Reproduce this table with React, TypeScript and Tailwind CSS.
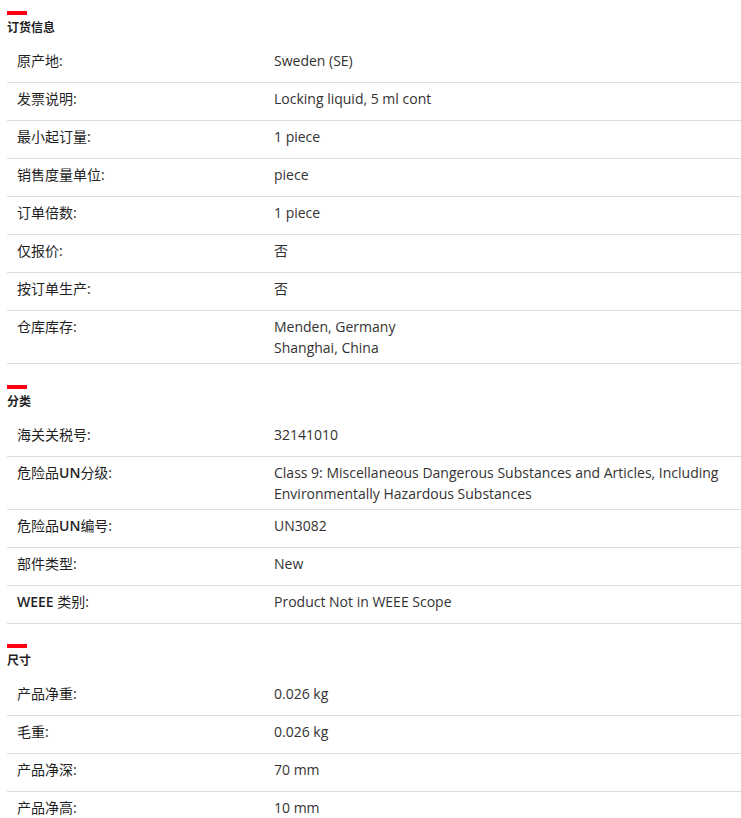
import React from "react";

type Row = { label: string; value: string[] };
type Section = { title: string; rows: Row[]; tight?: boolean };

const sections: Section[] = [
  {
    title: "订货信息",
    rows: [
      { label: "原产地:", value: ["Sweden (SE)"] },
      { label: "发票说明:", value: ["Locking liquid, 5 ml cont"] },
      { label: "最小起订量:", value: ["1 piece"] },
      { label: "销售度量单位:", value: ["piece"] },
      { label: "订单倍数:", value: ["1 piece"] },
      { label: "仅报价:", value: ["否"] },
      { label: "按订单生产:", value: ["否"] },
      { label: "仓库库存:", value: ["Menden, Germany", "Shanghai, China"] },
    ],
  },
  {
    title: "分类",
    rows: [
      { label: "海关关税号:", value: ["32141010"] },
      {
        label: "危险品UN分级:",
        value: [
          "Class 9: Miscellaneous Dangerous Substances and Articles, Including Environmentally Hazardous Substances",
        ],
      },
      { label: "危险品UN编号:", value: ["UN3082"] },
      { label: "部件类型:", value: ["New"] },
      { label: "WEEE 类别:", value: ["Product Not in WEEE Scope"] },
    ],
  },
  {
    title: "尺寸",
    tight: true,
    rows: [
      { label: "产品净重:", value: ["0.026 kg"] },
      { label: "毛重:", value: ["0.026 kg"] },
      { label: "产品净深:", value: ["70 mm"] },
      { label: "产品净高:", value: ["10 mm"] },
    ],
  },
];

const font = { fontFamily: '"Open Sans", "Noto Sans CJK SC", sans-serif' };

function Label({ text }: { text: string }) {
  const parts = text.split(/([A-Za-z]+)/);
  return (
    <>
      {parts.map((p, i) =>
        /^[A-Za-z]+$/.test(p) ? (
          <span key={i} className="font-semibold">
            {p}
          </span>
        ) : (
          <span key={i}>{p}</span>
        )
      )}
    </>
  );
}

export default function App() {
  return (
    <div
      className="min-h-[818px] w-[741px] overflow-hidden bg-white pl-[7px] pt-[11px] text-[#262626]"
      style={font}
    >
      <div className="flex flex-col gap-[21px]">
        {sections.map((s) => (
          <section key={s.title} className={s.tight ? "-mt-[1px]" : ""}>
            <div className="h-[4px] w-[20px] bg-[#ff000f]" />
            <h2 className="mt-[4px] mb-[10px] text-[12px] font-bold leading-[17px] text-[#1f1f1f]">
              {s.title}
            </h2>
            <div className="-mt-[1px]">
              {s.rows.map((r) => (
                <div
                  key={r.label}
                  className="flex min-h-[38px] border-b border-[#dcdcdc] pb-[5px] pl-[10px] pt-[5px] text-[14px] leading-[21px]"
                >
                  <div className="w-[257px] shrink-0 text-[#1f1f1f]">
                    <Label text={r.label} />
                  </div>
                  <div className="flex-1 pr-[12px] text-[#333333]">
                    {r.value.map((v) => (
                      <div key={v}>{v}</div>
                    ))}
                  </div>
                </div>
              ))}
            </div>
          </section>
        ))}
      </div>
    </div>
  );
}
